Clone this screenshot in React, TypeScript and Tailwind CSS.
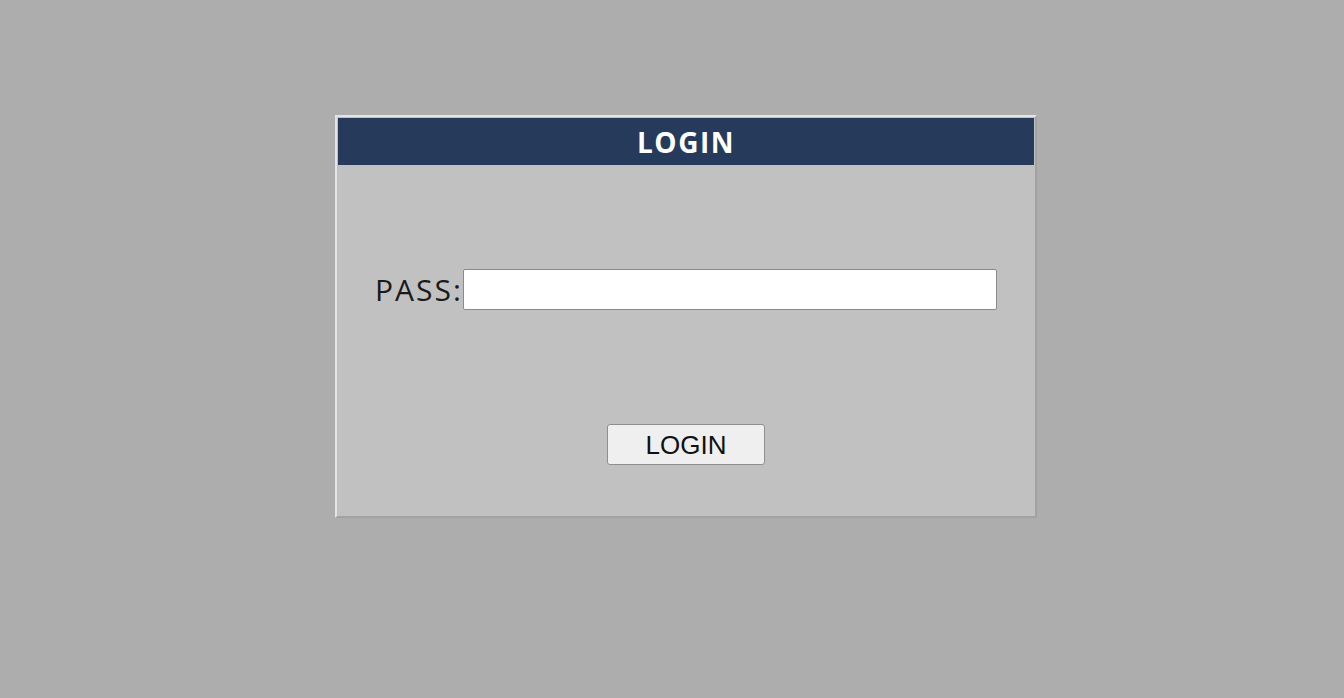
export default function App() {
  return (
    <div className="min-h-screen w-full bg-[#adadad] pt-[115px]">
      <div className="ml-[335px] flex h-[403px] w-[702px] flex-col border-2 border-t-[#e4e4e4] border-l-[#e4e4e4] border-r-[#a2a2a2] border-b-[#a2a2a2] bg-[#c1c1c1] p-px">
        <div className="flex h-[47px] items-center justify-center bg-[#263b5b]">
          <span className="font-['Open_Sans',sans-serif] text-[28px] font-bold leading-none tracking-[1.5px] text-white">
            LOGIN
          </span>
        </div>

        <div className="mt-[104px] flex items-center px-[37px]">
          <label className="font-['Open_Sans',sans-serif] text-[30px] leading-none tracking-[2px] text-[#1a1a1a]">
            PASS:
          </label>
          <input
            type="password"
            className="h-[41px] flex-1 rounded-[2px] border border-[#8a8a8a] bg-white outline-none"
          />
        </div>

        <div className="mt-[114px] flex justify-center">
          <button className="h-[41px] w-[158px] rounded-[3px] border border-[#8f8f8f] bg-[#efefef] font-['Liberation_Sans',Arial,sans-serif] text-[26px] leading-none text-[#111]">
            LOGIN
          </button>
        </div>
      </div>
    </div>
  );
}
